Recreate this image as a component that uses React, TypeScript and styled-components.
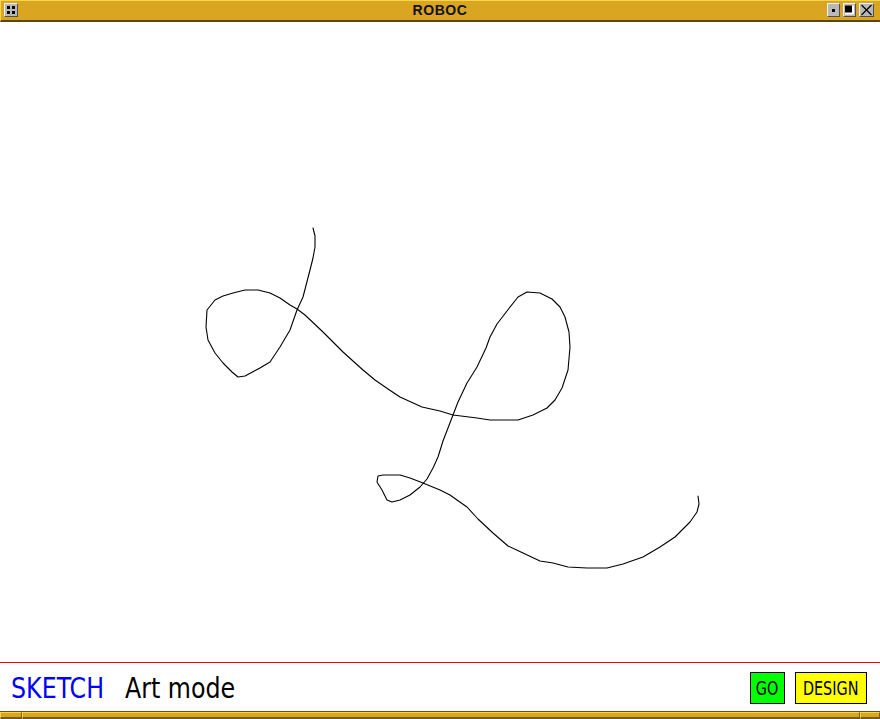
import React from "react";
import styled, { createGlobalStyle } from "styled-components";

const Global = createGlobalStyle`
  html, body { margin: 0; padding: 0; background: #ffffff; }
  #root { width: 880px; height: 719px; }
`;

const Window = styled.div`
  width: 880px;
  height: 719px;
  display: flex;
  flex-direction: column;
  background: #ffffff;
  overflow: hidden;
`;

const TitleBar = styled.div`
  box-sizing: border-box;
  height: 22px;
  flex: none;
  display: grid;
  grid-template-columns: 1fr auto 1fr;
  align-items: start;
  padding: 2px 6px 0 3px;
  background: #daa520;
  border-top: 1px solid #f6d64c;
  border-left: 1px solid #f6d64c;
  border-bottom: 2px solid #5c4610;
`;

const Title = styled.div`
  font-family: "Liberation Sans", Arial, sans-serif;
  font-weight: bold;
  font-size: 14px;
  letter-spacing: 0.6px;
  line-height: 15px;
  color: #111;
  padding-left: 2px;
`;

const WinButton = styled.div<{ $w?: number }>`
  box-sizing: border-box;
  width: ${(p) => p.$w ?? 14}px;
  height: 14px;
  background: #b8b8b8;
  border-top: 1px solid #f0f0f0;
  border-left: 1px solid #f0f0f0;
  border-right: 1px solid #505050;
  border-bottom: 1px solid #505050;
  display: flex;
  align-items: center;
  justify-content: center;
`;

const LeftSlot = styled.div`
  display: flex;
`;

const WinButtons = styled.div`
  display: flex;
  justify-content: flex-end;
  gap: 3px;
`;

const Canvas = styled.div`
  flex: 1;
  position: relative;
  border-bottom: 1px solid #ff0000;
`;

const StatusBar = styled.div`
  box-sizing: border-box;
  height: 48px;
  flex: none;
  display: flex;
  align-items: center;
  padding: 0 13px 0 11px;
  font-family: "DejaVu Sans Condensed", "DejaVu Sans", sans-serif;
`;

const Labels = styled.div`
  flex: 1;
  display: flex;
  align-items: baseline;
  transform: scaleX(0.91);
  transform-origin: left center;
  margin-top: 2px;
`;

const Mode = styled.span`
  color: #0000ff;
  font-size: 29px;
  line-height: 1;
  margin-right: 23px;
`;

const ModeText = styled.span`
  color: #000;
  font-size: 29px;
  line-height: 1;
`;

const ActionButton = styled.div<{ $bg: string; $w: number }>`
  box-sizing: border-box;
  width: ${(p) => p.$w}px;
  height: 32px;
  display: flex;
  align-items: center;
  justify-content: center;
  border: 1px solid #000;
  background: ${(p) => p.$bg};
  color: #000;
  font-size: 20px;
  margin-left: 10px;
  margin-top: 2px;
`;

const ButtonLabel = styled.span`
  display: inline-block;
  transform: scaleX(0.8);
  white-space: nowrap;
`;

const BottomFrame = styled.div`
  box-sizing: border-box;
  height: 8px;
  flex: none;
  display: flex;
  background: #daa520;
  border-top: 1px solid #6a5010;
`;

const FrameSeg = styled.div<{ $w?: number }>`
  box-sizing: border-box;
  ${(p) => (p.$w ? `width: ${p.$w}px;` : "flex: 1;")}
  border-top: 1px solid #f6d64c;
  border-left: 1px solid #f6d64c;
  border-right: 1px solid #7a5c12;
  border-bottom: 2px solid #7a5c12;
`;

const pts: [number, number][] = [
  [313, 228], [315, 236], [315, 247], [313, 258], [310, 270], [303, 297], [297, 310],
  [290, 330], [280, 347], [270, 362], [260, 368], [245, 376], [238, 377],
  [232, 372], [223, 363], [215, 353], [208, 340], [206, 327], [207, 310],
  [215, 300], [223, 296], [233, 293], [245, 290], [258, 290], [270, 293],
  [280, 298], [290, 305], [297, 309], [305, 315], [323, 332], [343, 352],
  [363, 370], [375, 380], [388, 389], [400, 397], [422, 407], [440, 411], [453, 415],
  [477, 418], [490, 420], [518, 420], [533, 415], [547, 408], [555, 400],
  [562, 388], [568, 370], [570, 347], [569, 332], [565, 317], [560, 307],
  [552, 299], [540, 293], [527, 292], [518, 297], [507, 311], [497, 324],
  [490, 337], [486, 348], [477, 367], [467, 383], [458, 402], [453, 415],
  [448, 428], [443, 441], [438, 457], [433, 468], [427, 479], [420, 487], [410, 495],
  [400, 500], [392, 502], [387, 500], [382, 490], [377, 482], [378, 476],
  [383, 475], [400, 475], [410, 478], [423, 483], [440, 490], [450, 495],
  [457, 500], [467, 507], [478, 519], [493, 533], [508, 546], [523, 553],
  [540, 561], [553, 563], [568, 567], [587, 568], [607, 568], [623, 564],
  [643, 557], [660, 547], [675, 537], [690, 522], [697, 512], [699, 504], [698, 496],
];

function App() {
  const d = pts.map(([x, y]) => `${x},${y - 22}`).join(" ");
  return (
    <>
      <Global />
      <Window>
        <TitleBar>
          <LeftSlot>
            <WinButton>
              <svg width="12" height="12" viewBox="0 0 12 12">
                <rect x="2" y="2" width="3" height="3" fill="#000" />
                <rect x="7" y="2" width="3" height="3" fill="#000" />
                <rect x="2" y="7" width="3" height="3" fill="#000" />
                <rect x="7" y="7" width="3" height="3" fill="#000" />
              </svg>
            </WinButton>
          </LeftSlot>
          <Title>ROBOC</Title>
          <WinButtons>
            <WinButton $w={13}>
              <svg width="11" height="12" viewBox="0 0 11 12">
                <rect x="4" y="5" width="3" height="3" fill="#000" />
              </svg>
            </WinButton>
            <WinButton $w={13}>
              <svg width="11" height="12" viewBox="0 0 11 12">
                <rect x="1" y="1.5" width="9" height="9" fill="#fff" />
                <rect x="1" y="1.5" width="7" height="7" fill="#000" />
              </svg>
            </WinButton>
            <WinButton $w={15}>
              <svg width="13" height="12" viewBox="0 0 13 12">
                <path d="M1.5 1 L11.5 11 M11.5 1 L1.5 11" stroke="#000" strokeWidth="1.2" fill="none" />
              </svg>
            </WinButton>
          </WinButtons>
        </TitleBar>
        <Canvas>
          <svg width="880" height="640" viewBox="0 0 880 640" style={{ display: "block" }}>
            <polyline points={d} fill="none" stroke="#000" strokeWidth="1.1" strokeLinejoin="round" strokeLinecap="round" />
          </svg>
        </Canvas>
        <StatusBar>
          <Labels>
            <Mode>SKETCH</Mode>
            <ModeText>Art mode</ModeText>
          </Labels>
          <ActionButton $bg="#00ff00" $w={35}>
            <ButtonLabel>GO</ButtonLabel>
          </ActionButton>
          <ActionButton $bg="#ffff00" $w={72}>
            <ButtonLabel>DESIGN</ButtonLabel>
          </ActionButton>
        </StatusBar>
        <BottomFrame>
          <FrameSeg $w={22} />
          <FrameSeg />
          <FrameSeg $w={20} />
        </BottomFrame>
      </Window>
    </>
  );
}

export default App;
